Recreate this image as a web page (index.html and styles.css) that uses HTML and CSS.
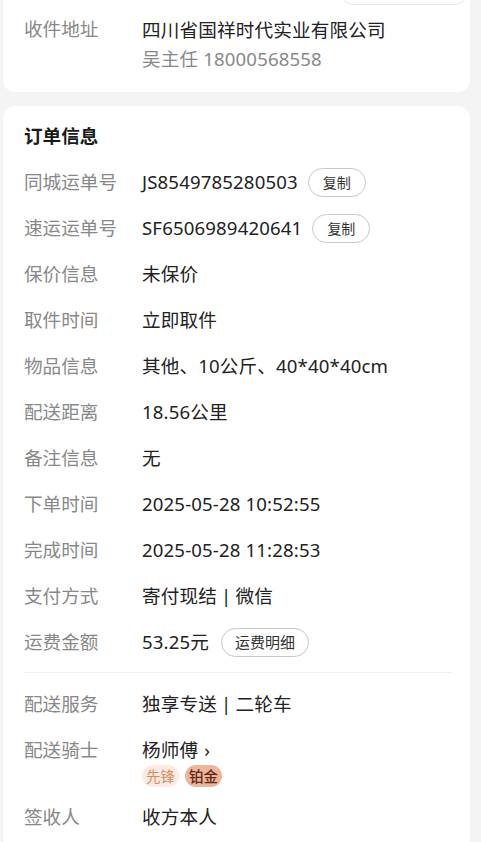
FILE: index.html
```html
<!DOCTYPE html>
<html lang="zh-CN">
<head>
  <meta charset="UTF-8">
  <meta name="viewport" content="width=device-width, initial-scale=1.0">
  <title>订单详情</title>
  <link rel="stylesheet" href="styles.css">
</head>
<body>
  <div class="page">
    <div class="card card-top">
      <div class="prev-action"><span class="prev-pill"></span></div>
      <div class="row addr-row">
        <div class="label">收件地址</div>
        <div class="value">
          <div>四川省国祥时代实业有限公司</div>
          <div class="sub">吴主任 18000568558</div>
        </div>
      </div>
    </div>

    <div class="card card-order">
      <div class="row title">订单信息</div>
      <div class="row">
        <div class="label">同城运单号</div>
        <div class="value">JS8549785280503<span class="btn">复制</span></div>
      </div>
      <div class="row">
        <div class="label">速运运单号</div>
        <div class="value">SF6506989420641<span class="btn">复制</span></div>
      </div>
      <div class="row">
        <div class="label">保价信息</div>
        <div class="value">未保价</div>
      </div>
      <div class="row">
        <div class="label">取件时间</div>
        <div class="value">立即取件</div>
      </div>
      <div class="row">
        <div class="label">物品信息</div>
        <div class="value">其他、10公斤、40*40*40cm</div>
      </div>
      <div class="row">
        <div class="label">配送距离</div>
        <div class="value">18.56公里</div>
      </div>
      <div class="row">
        <div class="label">备注信息</div>
        <div class="value">无</div>
      </div>
      <div class="row">
        <div class="label">下单时间</div>
        <div class="value">2025-05-28 10:52:55</div>
      </div>
      <div class="row">
        <div class="label">完成时间</div>
        <div class="value">2025-05-28 11:28:53</div>
      </div>
      <div class="row">
        <div class="label">支付方式</div>
        <div class="value">寄付现结<span class="sep">|</span>微信</div>
      </div>
      <div class="row">
        <div class="label">运费金额</div>
        <div class="value">53.25元<span class="btn btn-wide">运费明细</span></div>
      </div>

      <div class="divider"></div>

      <div class="row">
        <div class="label">配送服务</div>
        <div class="value">独享专送<span class="sep">|</span>二轮车</div>
      </div>
      <div class="row rider-row">
        <div class="label">配送骑士</div>
        <div class="value">
          <div class="rider">杨师傅 <span class="arrow">›</span></div>
          <div class="tags">
            <span class="tag tag-light">先锋</span>
            <span class="tag tag-gold">铂金</span>
          </div>
        </div>
      </div>
      <div class="row">
        <div class="label">签收人</div>
        <div class="value">收方本人</div>
      </div>
    </div>
  </div>
</body>
</html>
```

FILE: styles.css
```css
body {
  margin: 0;
  background-color: #f4f4f4;
  font-family: "Noto Sans", "Noto Sans CJK SC", sans-serif;
  color: #222;
  overflow: hidden;
}
.page {
  width: 467px;
  margin-left: 3px;
}
.card {
  background-color: #fff;
  border-radius: 12px;
}
.card-top {
  border-radius: 0 0 12px 12px;
  padding-bottom: 19px;
}
.prev-action {
  height: 0;
  display: flex;
  justify-content: flex-end;
}
.prev-pill {
  width: 132px;
  height: 36px;
  margin-top: -33px;
  margin-right: -1px;
  border: 1px solid #e6e6e6;
  border-radius: 18px;
  background-color: #fff;
}
.card-order {
  margin-top: 14px;
  padding-top: 7px;
  padding-bottom: 20px;
}
.row {
  display: flex;
  align-items: center;
  box-sizing: border-box;
  height: 46px;
  padding: 0 21px;
  font-size: 18.6px;
  line-height: 26px;
}
.addr-row {
  align-items: flex-start;
  height: auto;
  padding-top: 16px;
  line-height: 29px;
}
.addr-row .label {
  line-height: 26px;
}
.addr-row .value {
  margin-top: -1px;
}
.label {
  width: 118px;
  flex-shrink: 0;
  color: #888;
}
.value {
  display: flex;
  align-items: center;
  color: #222;
  letter-spacing: 0.15px;
}
.addr-row .value,
.rider-row .value {
  display: block;
}
.sub {
  color: #888;
}
.sep {
  margin: 0 4px;
}
.title {
  font-size: 18.6px;
  font-weight: bold;
  color: #1a1a1a;
}
.btn {
  display: inline-block;
  box-sizing: border-box;
  margin-left: 10px;
  height: 29px;
  line-height: 27px;
  padding: 0 14px;
  border: 1px solid #c8c8c8;
  border-radius: 15px;
  font-size: 14px;
  letter-spacing: 0;
  color: #333;
}
.btn-wide {
  margin-left: 12px;
  padding: 0 13px;
  font-size: 15px;
}
.divider {
  height: 1px;
  background-color: #eee;
  margin: 7px 18px 8px 21px;
}
.rider-row {
  align-items: flex-start;
  height: auto;
  padding-top: 10px;
  padding-bottom: 7px;
}
.arrow {
  margin-left: 1px;
}
.tags {
  display: flex;
  gap: 6px;
  margin-top: 2px;
}
.tag {
  display: inline-block;
  height: 22px;
  line-height: 22px;
  padding: 0 4px;
  border-radius: 11px;
  font-size: 14.5px;
  letter-spacing: 0;
}
.tag-light {
  background-color: #fdeae1;
  color: #db8a62;
}
.tag-gold {
  background-color: #efb59c;
  color: #5c2a16;
  font-weight: 500;
}
```
